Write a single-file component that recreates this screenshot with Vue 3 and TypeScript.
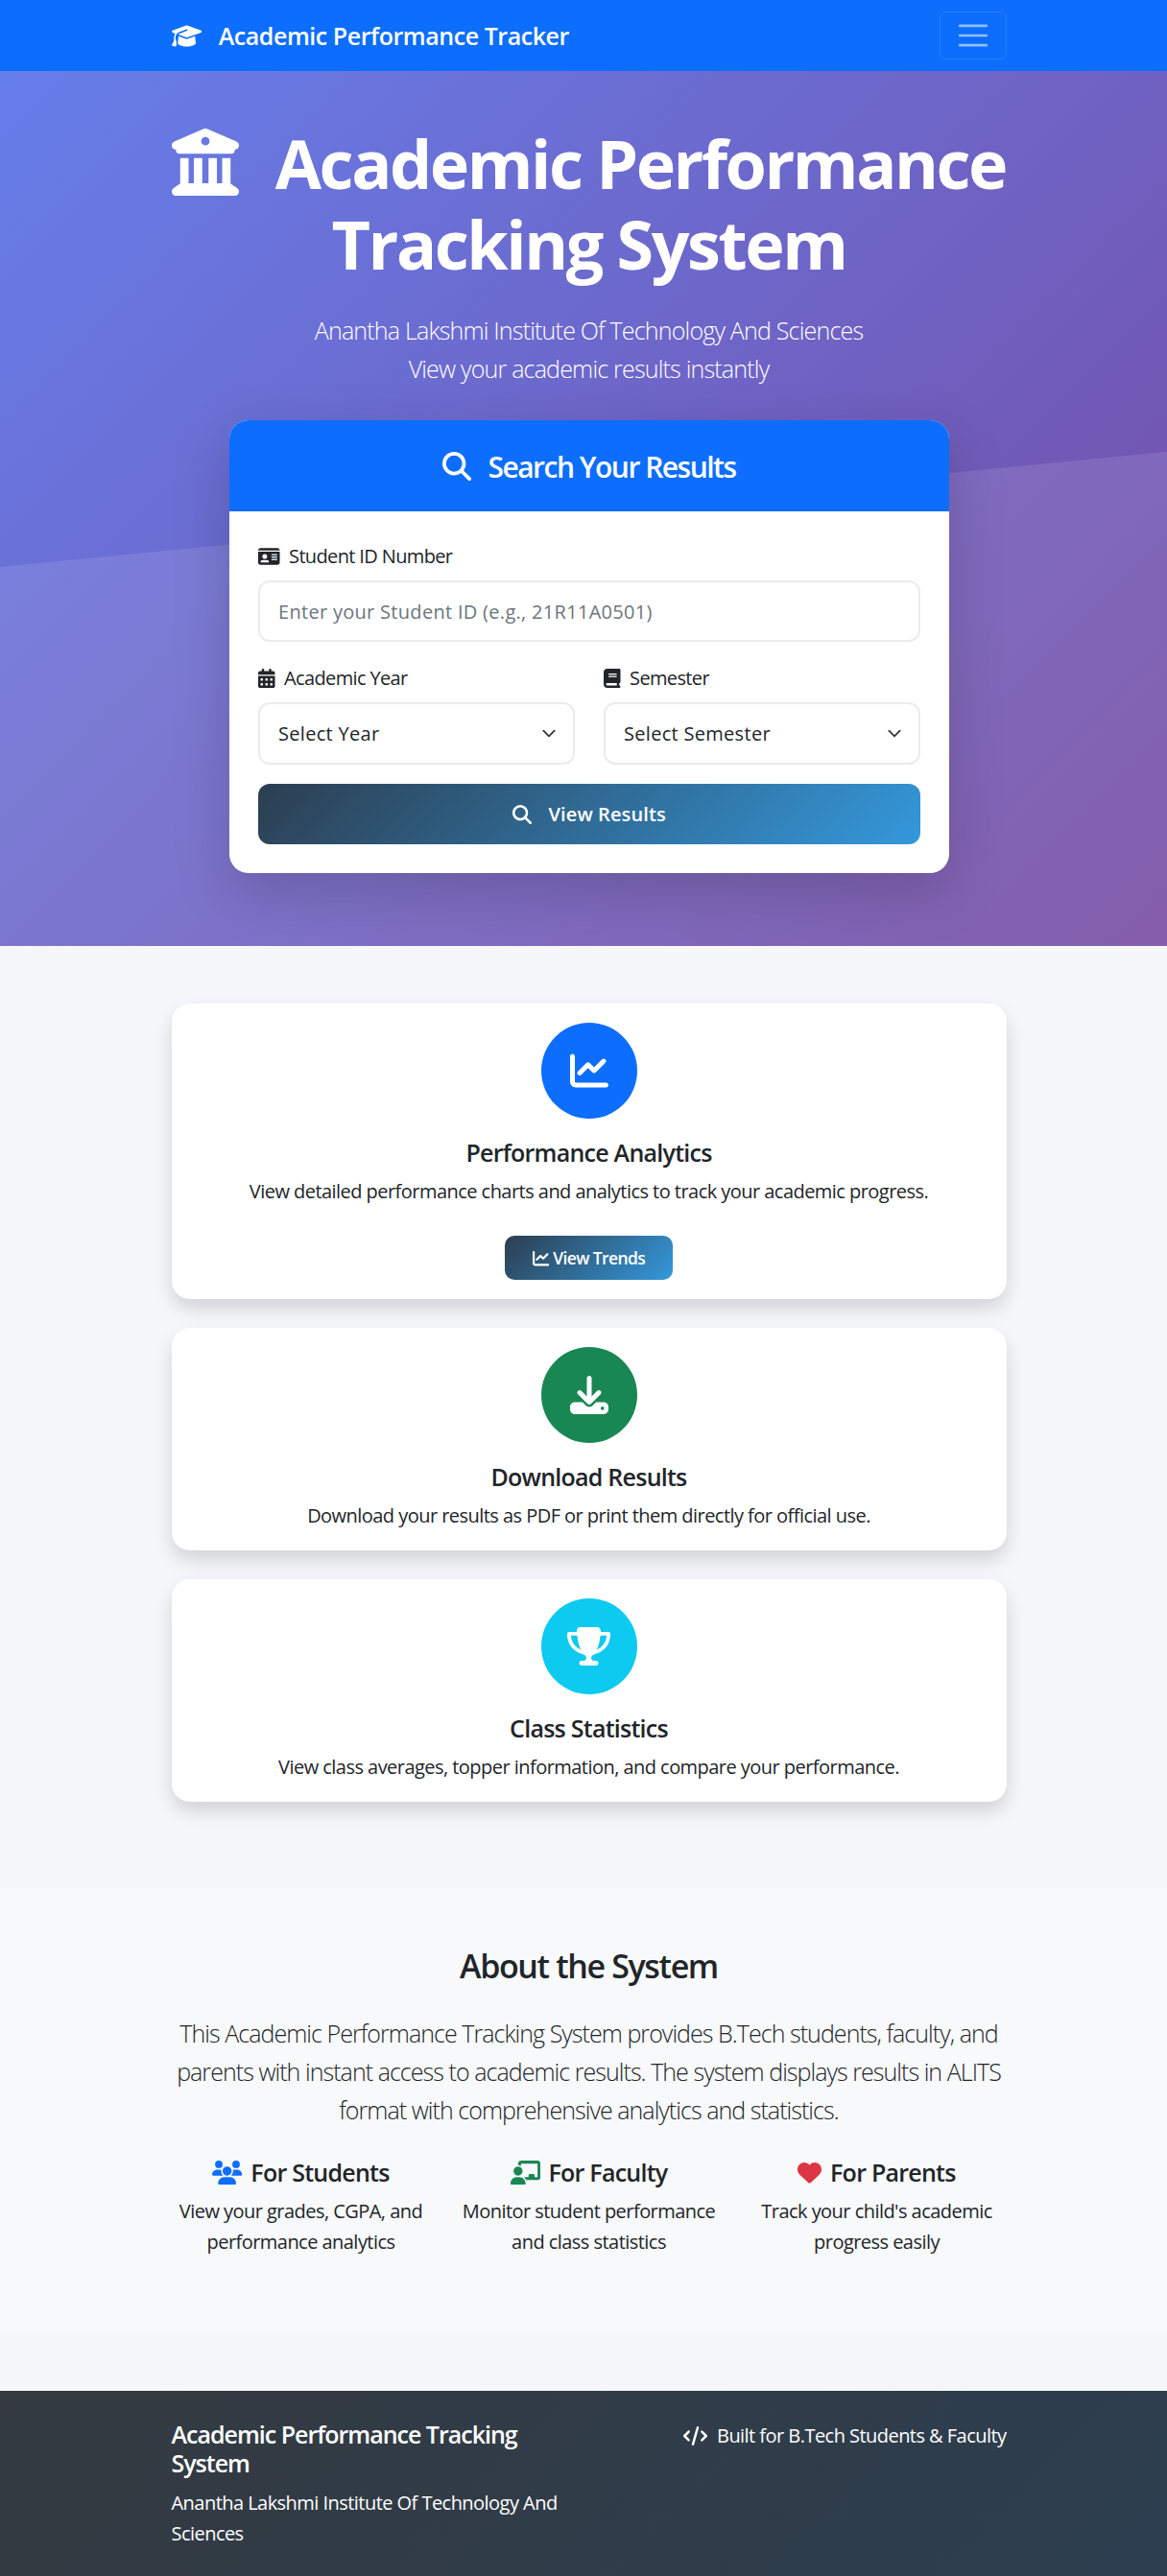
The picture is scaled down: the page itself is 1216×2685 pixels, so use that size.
<script setup lang="ts">
// FontAwesome style icon shapes
const icons = {
  cap: { w: 640, d: 'M320 32c-8.1 0-16.1 1.4-23.7 4.1L15.8 137.4C6.3 140.9 0 149.9 0 160s6.3 19.1 15.8 22.6l57.9 20.9C57.3 229.3 48 259.8 48 291.9v28.1c0 28.4-10.8 57.7-22.3 80.8c-6.5 13-13.9 25.8-22.5 37.6C0 442.7-.9 448.3 .9 453.4s6 8.9 11.2 10.2l64 16c4.2 1.1 8.7 .3 12.4-2s6.3-6.1 7.1-10.4c8.6-42.8 4.3-81.2-2.1-108.7C90.3 344.3 86 329.8 80 316.5V291.9c0-30.2 10.2-58.7 27.9-81.5c12.9-15.5 29.6-28 49.2-35.7l157-61.7c8.2-3.2 17.5 .8 20.7 9s-.8 17.5-9 20.7l-157 61.7c-12.4 4.9-23.3 12.4-32.2 21.6l159.6 57.6c7.6 2.7 15.6 4.1 23.7 4.1s16.1-1.4 23.7-4.1L624.2 182.6c9.5-3.4 15.8-12.5 15.8-22.6s-6.3-19.1-15.8-22.6L343.7 36.1C336.1 33.4 328.1 32 320 32zM128 408c0 35.3 86 72 192 72s192-36.7 192-72L496.7 262.6 354.5 314c-11.1 4-22.8 6-34.5 6s-23.5-2-34.5-6L143.3 262.6 128 408z' },
  columns: { w: 512, d: 'M243.4 2.6l-224 96c-14 6-21.8 21-18.7 35.8S16.8 160 32 160v8c0 13.3 10.7 24 24 24H456c13.3 0 24-10.7 24-24v-8c15.2 0 28.3-10.7 31.3-25.6s-4.8-29.9-18.7-35.8l-224-96c-8-3.4-17.2-3.4-25.2 0zM128 224H64V420.3c-.6 .3-1.2 .7-1.8 1.1l-48 32c-11.7 7.8-17 22.4-12.9 35.9S17.9 512 32 512H480c14.1 0 26.5-9.2 30.6-22.7s-1.1-28.1-12.9-35.9l-48-32c-.6-.4-1.2-.7-1.8-1.1V224H384V416H344V224H280V416H232V224H168V416H128V224zM256 64a32 32 0 1 1 0 64 32 32 0 1 1 0-64z' },
  search: { w: 512, d: 'M416 208c0 45.9-14.9 88.3-40 122.7L502.6 457.4c12.5 12.5 12.5 32.8 0 45.3s-32.8 12.5-45.3 0L330.7 376c-34.4 25.2-76.8 40-122.7 40C93.1 416 0 322.9 0 208S93.1 0 208 0S416 93.1 416 208zM208 352a144 144 0 1 0 0-288 144 144 0 1 0 0 288z' },
  idCard: { w: 576, d: 'M0 96l576 0c0-35.3-28.7-64-64-64H64C28.7 32 0 60.7 0 96zm0 32V416c0 35.3 28.7 64 64 64H512c35.3 0 64-28.7 64-64V128H0zM64 405.3c0-29.5 23.9-53.3 53.3-53.3H234.7c29.5 0 53.3 23.9 53.3 53.3c0 5.9-4.8 10.7-10.7 10.7H74.7c-5.9 0-10.7-4.8-10.7-10.7zM176 192a64 64 0 1 1 0 128 64 64 0 1 1 0-128zm176 16c0-8.8 7.2-16 16-16H496c8.8 0 16 7.2 16 16s-7.2 16-16 16H368c-8.8 0-16-7.2-16-16zm0 64c0-8.8 7.2-16 16-16H496c8.8 0 16 7.2 16 16s-7.2 16-16 16H368c-8.8 0-16-7.2-16-16zm0 64c0-8.8 7.2-16 16-16H496c8.8 0 16 7.2 16 16s-7.2 16-16 16H368c-8.8 0-16-7.2-16-16z' },
  calendar: { w: 448, d: 'M128 0c17.7 0 32 14.3 32 32V64H288V32c0-17.7 14.3-32 32-32s32 14.3 32 32V64h48c26.5 0 48 21.5 48 48v48H0V112C0 85.5 21.5 64 48 64H96V32c0-17.7 14.3-32 32-32zM0 192H448V464c0 26.5-21.5 48-48 48H48c-26.5 0-48-21.5-48-48V192zm64 80v32c0 8.8 7.2 16 16 16h32c8.8 0 16-7.2 16-16V272c0-8.8-7.2-16-16-16H80c-8.8 0-16 7.2-16 16zm128 0v32c0 8.8 7.2 16 16 16h32c8.8 0 16-7.2 16-16V272c0-8.8-7.2-16-16-16H208c-8.8 0-16 7.2-16 16zm144-16c-8.8 0-16 7.2-16 16v32c0 8.8 7.2 16 16 16h32c8.8 0 16-7.2 16-16V272c0-8.8-7.2-16-16-16H336zM64 400v32c0 8.8 7.2 16 16 16h32c8.8 0 16-7.2 16-16V400c0-8.8-7.2-16-16-16H80c-8.8 0-16 7.2-16 16zm144-16c-8.8 0-16 7.2-16 16v32c0 8.8 7.2 16 16 16h32c8.8 0 16-7.2 16-16V400c0-8.8-7.2-16-16-16H208zm112 16v32c0 8.8 7.2 16 16 16h32c8.8 0 16-7.2 16-16V400c0-8.8-7.2-16-16-16H336c-8.8 0-16 7.2-16 16z' },
  book: { w: 448, d: 'M96 0C43 0 0 43 0 96V416c0 53 43 96 96 96H384h32c17.7 0 32-14.3 32-32s-14.3-32-32-32V384c17.7 0 32-14.3 32-32V32c0-17.7-14.3-32-32-32H384 96zm0 384H352v64H96c-17.7 0-32-14.3-32-32s14.3-32 32-32zm32-240c0-8.8 7.2-16 16-16H336c8.8 0 16 7.2 16 16s-7.2 16-16 16H144c-8.8 0-16-7.2-16-16zm16 48H336c8.8 0 16 7.2 16 16s-7.2 16-16 16H144c-8.8 0-16-7.2-16-16s7.2-16 16-16z' },
  chart: { w: 512, d: 'M64 64c0-17.7-14.3-32-32-32S0 46.3 0 64V400c0 44.2 35.8 80 80 80H480c17.7 0 32-14.3 32-32s-14.3-32-32-32H80c-8.8 0-16-7.2-16-16V64zm406.6 86.6c12.5-12.5 12.5-32.8 0-45.3s-32.8-12.5-45.3 0L320 210.7l-57.4-57.4c-12.5-12.5-32.8-12.5-45.3 0l-112 112c-12.5 12.5-12.5 32.8 0 45.3s32.8 12.5 45.3 0L240 221.3l57.4 57.4c12.5 12.5 32.8 12.5 45.3 0l128-128z' },
  download: { w: 512, d: 'M288 32c0-17.7-14.3-32-32-32s-32 14.3-32 32V274.7l-73.4-73.4c-12.5-12.5-32.8-12.5-45.3 0s-12.5 32.8 0 45.3l128 128c12.5 12.5 32.8 12.5 45.3 0l128-128c12.5-12.5 12.5-32.8 0-45.3s-32.8-12.5-45.3 0L288 274.7V32zM64 352c-35.3 0-64 28.7-64 64v32c0 35.3 28.7 64 64 64H448c35.3 0 64-28.7 64-64V416c0-35.3-28.7-64-64-64H346.5l-45.3 45.3c-25 25-65.5 25-90.5 0L165.5 352H64zm368 56a24 24 0 1 1 0 48 24 24 0 1 1 0-48z' },
  trophy: { w: 576, d: 'M400 0H176c-26.5 0-48.1 21.8-47.1 48.2c.2 5.3 .4 10.6 .7 15.8H24C10.7 64 0 74.7 0 88c0 92.6 33.5 157 78.5 200.7c44.3 43.1 98.3 64.8 138.1 75.8c23.4 6.5 39.4 26 39.4 45.6c0 20.9-17 37.9-37.9 37.9H192c-17.7 0-32 14.3-32 32s14.3 32 32 32H384c17.7 0 32-14.3 32-32s-14.3-32-32-32H357.9C337 448 320 431 320 410.1c0-19.6 15.9-39.2 39.4-45.6c39.9-11 93.9-32.7 138.2-75.8C542.5 245 576 180.6 576 88c0-13.3-10.7-24-24-24H446.4c.3-5.2 .5-10.4 .7-15.8C448.1 21.8 426.5 0 400 0zM48.9 112h84.4c9.1 90.1 29.2 150.3 51.9 190.6c-24.9-11-50.8-26.5-73.2-48.3c-32-31.1-58-76-63-142.3zM464.1 254.3c-22.4 21.8-48.3 37.3-73.2 48.3c22.7-40.3 42.8-100.5 51.9-190.6h84.4c-5.1 66.3-31.1 111.2-63 142.3z' },
  users: { w: 640, d: 'M144 0a80 80 0 1 1 0 160A80 80 0 1 1 144 0zM512 0a80 80 0 1 1 0 160A80 80 0 1 1 512 0zM0 298.7C0 239.8 47.8 192 106.7 192h42.7c15.9 0 31 3.5 44.6 9.7c-1.3 7.2-1.9 14.7-1.9 22.3c0 38.2 16.8 72.5 43.3 96c-.2 0-.4 0-.7 0H21.3C9.6 320 0 310.4 0 298.7zM405.3 320c-.2 0-.4 0-.7 0c26.6-23.5 43.3-57.8 43.3-96c0-7.6-.7-15-1.9-22.3c13.6-6.3 28.7-9.7 44.6-9.7h42.7C592.2 192 640 239.8 640 298.7c0 11.8-9.6 21.3-21.3 21.3H405.3zM224 224a96 96 0 1 1 192 0 96 96 0 1 1 -192 0zM128 485.3C128 411.7 187.7 352 261.3 352H378.7C452.3 352 512 411.7 512 485.3c0 14.7-11.9 26.7-26.7 26.7H154.7c-14.7 0-26.7-11.9-26.7-26.7z' },
  board: { w: 640, d: 'M160 64c0-35.3 28.7-64 64-64H576c35.3 0 64 28.7 64 64V352c0 35.3-28.7 64-64 64H336.8c-11.8-25.5-29.9-47.5-52.4-64H384V320c0-17.7 14.3-32 32-32h64c17.7 0 32 14.3 32 32v32h64V64L224 64v49.1C205.2 102.2 183.3 96 160 96V64zm0 64a96 96 0 1 1 0 192 96 96 0 1 1 0-192zM133.3 352h53.3C260.3 352 320 411.7 320 485.3c0 14.7-11.9 26.7-26.7 26.7H26.7C11.9 512 0 500.1 0 485.3C0 411.7 59.7 352 133.3 352z' },
  heart: { w: 512, d: 'M47.6 300.4L228.3 469.1c7.5 7 17.4 10.9 27.7 10.9s20.2-3.9 27.7-10.9L464.4 300.4c30.4-28.3 47.6-68 47.6-109.5v-5.8c0-69.9-50.5-129.5-119.4-141C347 36.5 300.6 51.4 268 84L256 96 244 84c-32.6-32.6-79-47.5-124.6-39.9C50.5 55.6 0 115.2 0 185.1v5.8c0 41.5 17.2 81.2 47.6 109.5z' },
  code: { w: 640, d: 'M392.8 1.2c-17-4.9-34.7 5-39.6 22l-128 448c-4.9 17 5 34.7 22 39.6s34.7-5 39.6-22l128-448c4.9-17-5-34.7-22-39.6zm80.6 120.1c-12.5 12.5-12.5 32.8 0 45.3L562.7 256l-89.4 89.4c-12.5 12.5-12.5 32.8 0 45.3s32.8 12.5 45.3 0l112-112c12.5-12.5 12.5-32.8 0-45.3l-112-112c-12.5-12.5-32.8-12.5-45.3 0zm-306.7 0c-12.5-12.5-32.8-12.5-45.3 0l-112 112c-12.5 12.5-12.5 32.8 0 45.3l112 112c12.5 12.5 32.8 12.5 45.3 0s12.5-32.8 0-45.3L77.3 256l89.4-89.4c12.5-12.5 12.5-32.8 0-45.3z' },
}

const featureCards = [
  { icon: icons.chart, color: '#0d6efd', title: 'Performance Analytics', text: 'View detailed performance charts and analytics to track your academic progress.', action: true },
  { icon: icons.download, color: '#198754', title: 'Download Results', text: 'Download your results as PDF or print them directly for official use.', action: false },
  { icon: icons.trophy, color: '#0dcaf0', title: 'Class Statistics', text: 'View class averages, topper information, and compare your performance.', action: false },
]

const audiences = [
  { icon: icons.users, color: '#0d6efd', title: 'For Students', text: 'View your grades, CGPA, and performance analytics' },
  { icon: icons.board, color: '#198754', title: 'For Faculty', text: 'Monitor student performance and class statistics' },
  { icon: icons.heart, color: '#dc3545', title: 'For Parents', text: "Track your child's academic progress easily" },
]
</script>

<template>
  <nav class="navbar">
    <div class="wrap navbar-inner">
      <a class="brand">
        <svg class="fa" :viewBox="`0 0 ${icons.cap.w} 512`"><path :d="icons.cap.d" /></svg>
        <span>Academic Performance Tracker</span>
      </a>
      <button class="toggler" type="button" aria-label="Menu">
        <svg width="38" height="38" viewBox="0 0 30 30"><path d="M4 7h22M4 15h22M4 23h22" stroke="rgba(255,255,255,.55)" stroke-width="2" stroke-linecap="round" /></svg>
      </button>
    </div>
  </nav>

  <header class="hero">
    <div class="wrap hero-inner">
      <h1>
        <svg class="fa hero-icon" :viewBox="`0 0 ${icons.columns.w} 512`"><path :d="icons.columns.d" /></svg>
        Academic Performance Tracking System
      </h1>
      <p class="lead">Anantha Lakshmi Institute Of Technology And Sciences<br />View your academic results instantly</p>

      <div class="search-card">
        <div class="search-head">
          <svg class="fa" :viewBox="`0 0 ${icons.search.w} 512`"><path :d="icons.search.d" /></svg>
          <h3>Search Your Results</h3>
        </div>
        <form class="search-body" @submit.prevent>
          <div class="field">
            <label>
              <svg class="fa" :viewBox="`0 0 ${icons.idCard.w} 512`"><path :d="icons.idCard.d" /></svg>
              Student ID Number
            </label>
            <input type="text" placeholder="Enter your Student ID (e.g., 21R11A0501)" />
          </div>
          <div class="field-row">
            <div class="field">
              <label>
                <svg class="fa" :viewBox="`0 0 ${icons.calendar.w} 512`"><path :d="icons.calendar.d" /></svg>
                Academic Year
              </label>
              <select><option>Select Year</option></select>
            </div>
            <div class="field">
              <label>
                <svg class="fa" :viewBox="`0 0 ${icons.book.w} 512`"><path :d="icons.book.d" /></svg>
                Semester
              </label>
              <select><option>Select Semester</option></select>
            </div>
          </div>
          <button class="btn-grad btn-full" type="submit">
            <svg class="fa" :viewBox="`0 0 ${icons.search.w} 512`"><path :d="icons.search.d" /></svg>
            View Results
          </button>
        </form>
      </div>
    </div>
  </header>

  <section class="wrap features">
    <div v-for="card in featureCards" :key="card.title" class="feature-card">
      <div class="circle" :style="{ background: card.color }">
        <svg class="fa" :viewBox="`0 0 ${card.icon.w} 512`"><path :d="card.icon.d" /></svg>
      </div>
      <h5>{{ card.title }}</h5>
      <p>{{ card.text }}</p>
      <button v-if="card.action" class="btn-grad btn-small" type="button">
        <svg class="fa" :viewBox="`0 0 ${icons.chart.w} 512`"><path :d="icons.chart.d" /></svg>
        View Trends
      </button>
    </div>
  </section>

  <section class="about">
    <div class="wrap">
      <h2>About the System</h2>
      <p class="about-text">This Academic Performance Tracking System provides B.Tech students, faculty, and parents with instant access to academic results. The system displays results in ALITS format with comprehensive analytics and statistics.</p>
      <div class="audience">
        <div v-for="item in audiences" :key="item.title">
          <h5>
            <svg class="fa" :style="{ color: item.color }" :viewBox="`0 0 ${item.icon.w} 512`"><path :d="item.icon.d" /></svg>
            {{ item.title }}
          </h5>
          <p>{{ item.text }}</p>
        </div>
      </div>
    </div>
  </section>

  <footer class="footer">
    <div class="wrap footer-inner">
      <div class="footer-left">
        <h5>Academic Performance Tracking System</h5>
        <p>Anantha Lakshmi Institute Of Technology And Sciences</p>
      </div>
      <p class="footer-right">
        <svg class="fa" :viewBox="`0 0 ${icons.code.w} 512`"><path :d="icons.code.d" /></svg>
        Built for B.Tech Students &amp; Faculty
      </p>
    </div>
  </footer>
</template>

<style>
body {
  background: #f5f7fa;
}
</style>

<style scoped>
* {
  box-sizing: border-box;
}

h1, h2, h3, h5, p {
  margin: 0;
}

.wrap {
  width: 870px;
  margin-left: 178.5px;
}

.fa {
  display: inline-block;
  height: 1em;
  width: auto;
  fill: currentColor;
  vertical-align: -0.125em;
}

/* 导航栏 */
.navbar {
  height: 74px;
  background: #0d6efd;
  font-family: "Open Sans", "Noto Sans", sans-serif;
}

.navbar-inner {
  height: 100%;
  display: flex;
  align-items: center;
  justify-content: space-between;
}

.brand {
  color: #fff;
  font-size: 25px;
  font-weight: 600;
  letter-spacing: -0.018em;
  display: flex;
  align-items: center;
  gap: 18px;
}

.toggler {
  width: 70px;
  height: 50px;
  padding: 0;
  background: transparent;
  border: 1px solid rgba(255, 255, 255, 0.1);
  border-radius: 7px;
  display: flex;
  align-items: center;
  justify-content: center;
}

/* 主视觉 */
.hero {
  position: relative;
  height: 912px;
  background: linear-gradient(135deg, #667eea 0%, #764ba2 100%);
  color: #fff;
  font-family: "Open Sans", "Noto Sans", sans-serif;
  overflow: hidden;
}

.hero::before {
  content: "";
  position: absolute;
  inset: 0;
  background: rgba(255, 255, 255, 0.1);
  clip-path: polygon(0 56.7%, 100% 43.5%, 100% 100%, 0 100%);
}

.hero-inner {
  position: relative;
  padding-top: 54px;
  text-align: center;
}

h1 {
  font-size: 70px;
  font-weight: 700;
  line-height: 84px;
  letter-spacing: -0.035em;
}

.hero-icon {
  margin-right: 22px;
  vertical-align: -0.1em;
}

.lead {
  margin-top: 28px;
  font-size: 25px;
  font-weight: 300;
  line-height: 40px;
  letter-spacing: -0.032em;
}

.search-card {
  width: 750px;
  margin: 34px 0 0 60.5px;
  background: #fff;
  border-radius: 20px;
  overflow: hidden;
  box-shadow: 0 20px 60px rgba(0, 0, 0, 0.175);
  color: #212529;
  text-align: left;
}

.search-head {
  height: 95px;
  padding-top: 1px;
  background: #0d6efd;
  color: #fff;
  display: flex;
  align-items: center;
  justify-content: center;
  gap: 17px;
  font-size: 30px;
}

.search-head h3 {
  font-size: 30px;
  font-weight: 600;
  letter-spacing: -0.05em;
}

.search-body {
  padding: 31px 30px 30px;
}

.field label {
  display: block;
  height: 32px;
  margin-bottom: 9px;
  font-size: 20px;
  line-height: 32px;
  letter-spacing: -0.032em;
}

.field label .fa {
  margin-right: 5px;
}

input, select {
  display: block;
  width: 100%;
  padding: 0 19px;
  border: 2px solid #e9ecef;
  border-radius: 12px;
  background-color: #fff;
  color: #212529;
  font-family: "Open Sans", "Noto Sans", sans-serif;
  font-size: 20px;
  outline: none;
}

input {
  height: 64px;
  letter-spacing: 0.015em;
}

input::placeholder {
  color: #6c757d;
  opacity: 1;
  letter-spacing: 0.015em;
}

select {
  height: 65px;
  letter-spacing: 0.015em;
  appearance: none;
  background-image: url("data:image/svg+xml,%3csvg xmlns='http://www.w3.org/2000/svg' viewBox='0 0 16 16'%3e%3cpath fill='none' stroke='%23343a40' stroke-linecap='round' stroke-linejoin='round' stroke-width='2' d='m2 5 6 6 6-6'/%3e%3c/svg%3e");
  background-repeat: no-repeat;
  background-position: right 15px center;
  background-size: 20px 15px;
}

.field-row {
  margin-top: 22px;
  display: grid;
  grid-template-columns: 1fr 1fr;
  column-gap: 30px;
}

.btn-grad {
  border: none;
  color: #fff;
  font-family: "Open Sans", "Noto Sans", sans-serif;
  font-weight: 600;
  letter-spacing: -0.035em;
  background: linear-gradient(135deg, #2c3e50 0%, #3498db 100%);
}

.btn-full {
  display: block;
  width: 100%;
  height: 63px;
  margin-top: 20px;
  border-radius: 12px;
  font-size: 20px;
  letter-spacing: 0.005em;
}

.btn-full .fa {
  margin-right: 12px;
}

/* 功能卡片 */
.features {
  padding: 60px 0 90px;
  display: flex;
  flex-direction: column;
  gap: 30px;
  font-family: "Open Sans", "Noto Sans", sans-serif;
}

.feature-card {
  background: #fff;
  border-radius: 19px;
  padding: 20px;
  text-align: center;
  color: #212529;
  box-shadow: 0 10px 20px rgba(0, 0, 0, 0.15);
}

.circle {
  width: 100px;
  height: 100px;
  margin: 0 auto 20px;
  border-radius: 50%;
  color: #fff;
  font-size: 40px;
  display: flex;
  align-items: center;
  justify-content: center;
}

.feature-card h5 {
  font-size: 25px;
  font-weight: 600;
  line-height: 30px;
  letter-spacing: -0.03em;
}

.feature-card p {
  margin-top: 10px;
  font-size: 20px;
  line-height: 32px;
  letter-spacing: -0.027em;
}

.btn-small {
  height: 46px;
  margin-top: 30px;
  padding: 0 29px;
  border-radius: 10px;
  font-size: 17.5px;
  vertical-align: top;
}

/* 关于 */
.about {
  height: 464px;
  padding-top: 60px;
  background: #f8f9fa;
  color: #212529;
  font-family: "Open Sans", "Noto Sans", sans-serif;
  text-align: center;
}

.about h2 {
  font-size: 34px;
  font-weight: 600;
  line-height: 42px;
  letter-spacing: -0.04em;
}

.about-text {
  margin-top: 29px;
  font-size: 25px;
  font-weight: 300;
  line-height: 40px;
  letter-spacing: -0.038em;
}

.audience {
  margin-top: 30px;
  display: grid;
  grid-template-columns: repeat(3, 1fr);
  column-gap: 30px;
}

.audience h5 {
  font-size: 25px;
  font-weight: 600;
  line-height: 30px;
  letter-spacing: -0.03em;
}

.audience h5 .fa {
  margin-right: 3px;
}

.audience p {
  margin-top: 10px;
  font-size: 20px;
  line-height: 32px;
  letter-spacing: -0.027em;
}

/* 页脚 */
.footer {
  margin-top: 60px;
  height: 193px;
  background: linear-gradient(135deg, #343a40 0%, #2c3e50 100%);
  color: #fff;
  font-family: "Open Sans", "Noto Sans", sans-serif;
}

.footer-inner {
  padding-top: 30px;
  display: flex;
  justify-content: space-between;
}

.footer-left {
  width: 420px;
}

.footer-left h5 {
  font-size: 25px;
  font-weight: 600;
  line-height: 30px;
  letter-spacing: -0.04em;
}

.footer-left p {
  margin-top: 11px;
  font-size: 20px;
  line-height: 32px;
  letter-spacing: -0.027em;
}

.footer-right {
  margin-top: 1px;
  font-size: 20px;
  line-height: 32px;
  letter-spacing: -0.027em;
}

.footer-right .fa {
  margin-right: 5px;
}
</style>
